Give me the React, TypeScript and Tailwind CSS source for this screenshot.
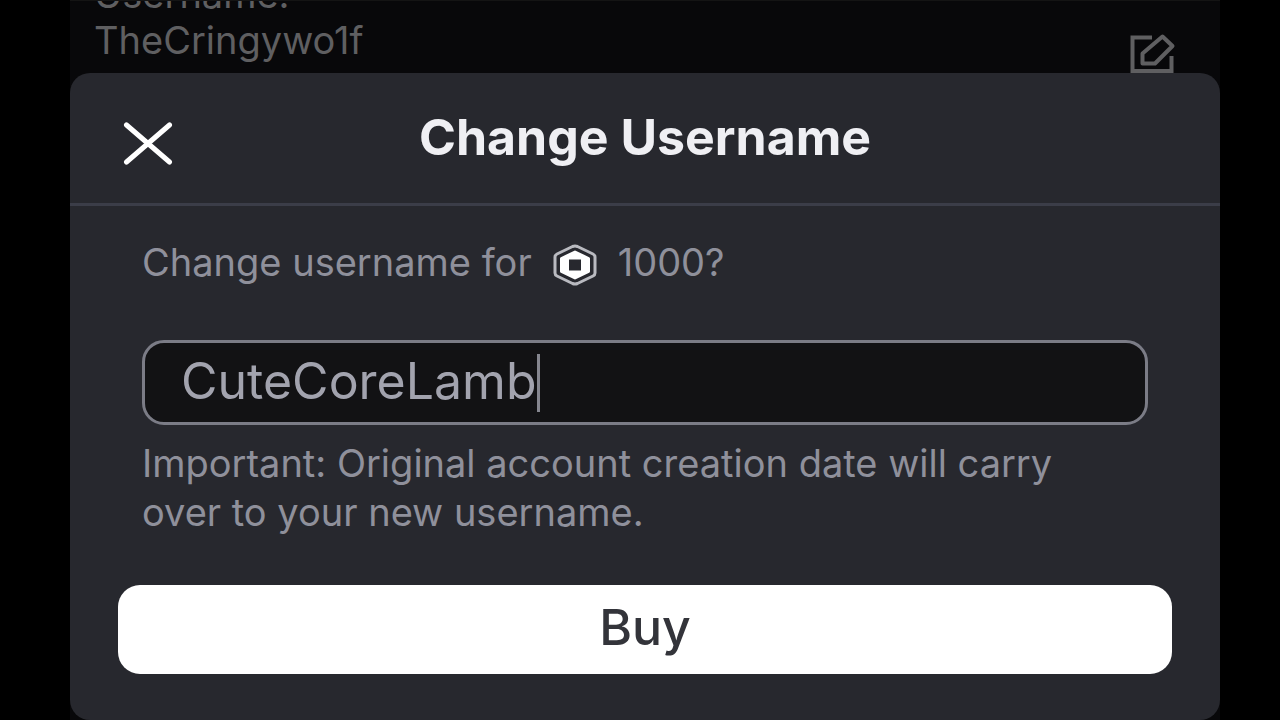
import { useState } from "react";

interface IIconProps {
  className?: string;
}

function CloseIcon({ className }: IIconProps) {
  return (
    <svg viewBox="0 0 50 44" fill="none" className={className} aria-hidden="true">
      <path d="M3.500 3L46.500 40M46.500 3L3.500 40" stroke="currentColor" strokeWidth="5" strokeLinecap="round" />
    </svg>
  );
}

function EditIcon({ className }: IIconProps) {
  return (
    <svg viewBox="0 0 46 40" fill="none" className={className} aria-hidden="true">
      <path d="M22 4.500H2.500V38H41.500V23" stroke="currentColor" strokeWidth="4" />
      <path d="M12.500 20.500L32.500 3.500L42.500 13L25 30.500H12.500Z" stroke="currentColor" strokeWidth="4" strokeLinejoin="round" />
    </svg>
  );
}

function RobuxIcon({ className }: IIconProps) {
  return (
    <svg viewBox="0 0 46 42" fill="none" className={className} aria-hidden="true">
      <path
        d="M20.500 2.500Q23 1.500 25.500 2.500L41 10Q43 11 43 13V29Q43 31 41 32L25.500 39.500Q23 40.500 20.500 39.500L5 32Q3 31 3 29V13Q3 11 5 10Z"
        stroke="#b9bac0"
        strokeWidth="3"
      />
      <path
        d="M23 8L36.500 14.500V27.500L23 34L9.500 27.500V14.500Z"
        fill="#ffffff"
        stroke="#ffffff"
        strokeWidth="3"
        strokeLinejoin="round"
      />
      <path d="M17 15.500H29V26.500H17Z" fill="#27282e" />
    </svg>
  );
}

export default function App() {
  const [username, setUsername] = useState("CuteCoreLamb");

  return (
    <div className="min-h-screen bg-black pl-[70px] pr-[60px] font-['Inter',sans-serif] overflow-hidden">
      <main className="bg-[#08080a]">
        {/* account row behind the sheet */}
        <div className="flex h-[73px] items-end justify-between overflow-hidden border-t border-[#141414] pl-6 pr-11 text-[#5f5f61]">
          <dl className="text-[38px] leading-[46px] pb-[10px]">
            <dt>Username:</dt>
            <dd>TheCringywo1f</dd>
          </dl>
          <button type="button" aria-label="Edit username">
            <EditIcon className="h-10 w-[46px]" />
          </button>
        </div>

        <section
          role="dialog"
          aria-labelledby="dialog-title"
          className="rounded-[20px] bg-[#27282e] pb-[46px]"
        >
          <header className="grid h-[133px] grid-cols-[1fr_auto_1fr] items-center border-b-[3px] border-[#3b3d48] px-[53px]">
            <button type="button" aria-label="Close" className="mt-3 justify-self-start text-white">
              <CloseIcon className="h-11 w-[50px]" />
            </button>
            <h1 id="dialog-title" className="pb-[2px] text-[50px] leading-[56px] font-bold text-[#efeff3]">
              Change Username
            </h1>
          </header>

          <form className="px-12" onSubmit={(e) => e.preventDefault()}>
            <div className="px-6 pt-8 text-[38px] leading-[49px] text-[#8f909b]">
              <p className="flex items-center">
                Change username for
                <RobuxIcon className="mx-5 mt-1 h-[42px] w-[46px]" />
                1000?
              </p>

              <label className="mt-[53px] flex h-[85px] items-center rounded-[22px] border-[3px] border-[#7b7c86] bg-[#121214] px-9 text-[50px] text-[#a2a3ae]">
                <input
                  type="text"
                  aria-label="New username"
                  value={username}
                  onChange={(e) => setUsername(e.target.value)}
                  className="field-sizing-content pb-1 leading-[58px] caret-transparent outline-none"
                />
                <span className="h-[58px] w-[3px] bg-[#85868f]" />
              </label>

              <p className="mt-[14px] pr-12">
                Important: Original account creation date will carry over to your new username.
              </p>
            </div>

            <button
              type="submit"
              className="mt-12 h-[89px] w-full rounded-[22px] bg-white pb-1 text-[50px] font-medium text-[#33343a]"
            >
              Buy
            </button>
          </form>
        </section>
      </main>
    </div>
  );
}
